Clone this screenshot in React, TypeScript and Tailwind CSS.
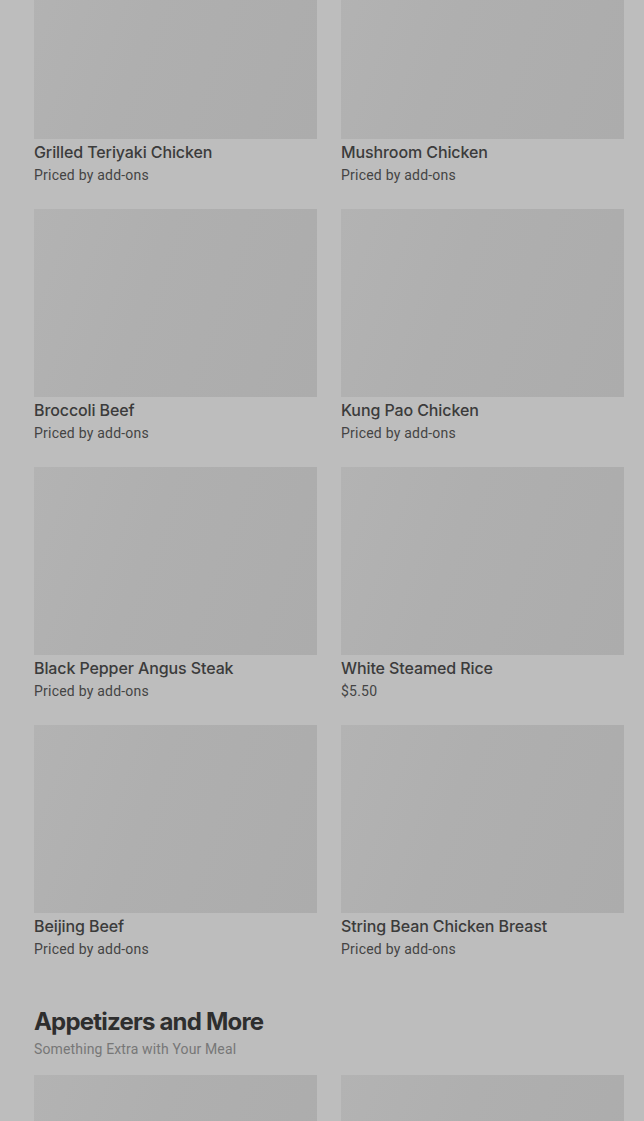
import React from "react";

type Item = { name: string; price: string };

const items: Item[] = [
  { name: "Grilled Teriyaki Chicken", price: "Priced by add-ons" },
  { name: "Mushroom Chicken", price: "Priced by add-ons" },
  { name: "Broccoli Beef", price: "Priced by add-ons" },
  { name: "Kung Pao Chicken", price: "Priced by add-ons" },
  { name: "Black Pepper Angus Steak", price: "Priced by add-ons" },
  { name: "White Steamed Rice", price: "$5.50" },
  { name: "Beijing Beef", price: "Priced by add-ons" },
  { name: "String Bean Chicken Breast", price: "Priced by add-ons" },
];

const small = { fontFamily: "Roboto, 'Noto Sans', sans-serif" };

function Card({ item }: { item: Item }) {
  return (
    <div className="pb-[24px]">
      <div className="h-[188px] w-full bg-[linear-gradient(110deg,#b3b3b3_0%,#afafaf_40%,#acacac_100%)]" />
      <div className="mt-[3px] text-[16px] leading-[20px] font-medium tracking-[-0.1px] text-[#3b3b3b] truncate">
        {item.name}
      </div>
      <div className="mt-[3px] text-[14px] leading-[20px] tracking-[0.22px] text-[#444444]" style={small}>
        {item.price}
      </div>
    </div>
  );
}

export default function App() {
  return (
    <div
      className="min-h-[1121px] w-full overflow-hidden bg-[#bdbdbd]"
      style={{ fontFamily: "Inter, 'Noto Sans', Roboto, sans-serif" }}
    >
      <div className="pl-[34px] pr-[20px] mt-[-49px]">
        <div className="grid grid-cols-2 gap-x-[24px]">
          {items.map((it) => (
            <Card key={it.name} item={it} />
          ))}
        </div>
        <div className="mt-[23px]">
          <h2 className="text-[24px] leading-[32px] font-bold tracking-[-0.8px] text-[#2e2e2e]">
            Appetizers and More
          </h2>
          <div className="mt-[1px] text-[14px] leading-[20px] tracking-[0.14px] text-[#777777]" style={small}>
            Something Extra with Your Meal
          </div>
        </div>
        <div className="mt-[16px] grid grid-cols-2 gap-x-[24px]">
          <div className="h-[188px] bg-[linear-gradient(110deg,#b3b3b3_0%,#afafaf_40%,#acacac_100%)]" />
          <div className="h-[188px] bg-[linear-gradient(110deg,#b3b3b3_0%,#afafaf_40%,#acacac_100%)]" />
        </div>
      </div>
    </div>
  );
}
